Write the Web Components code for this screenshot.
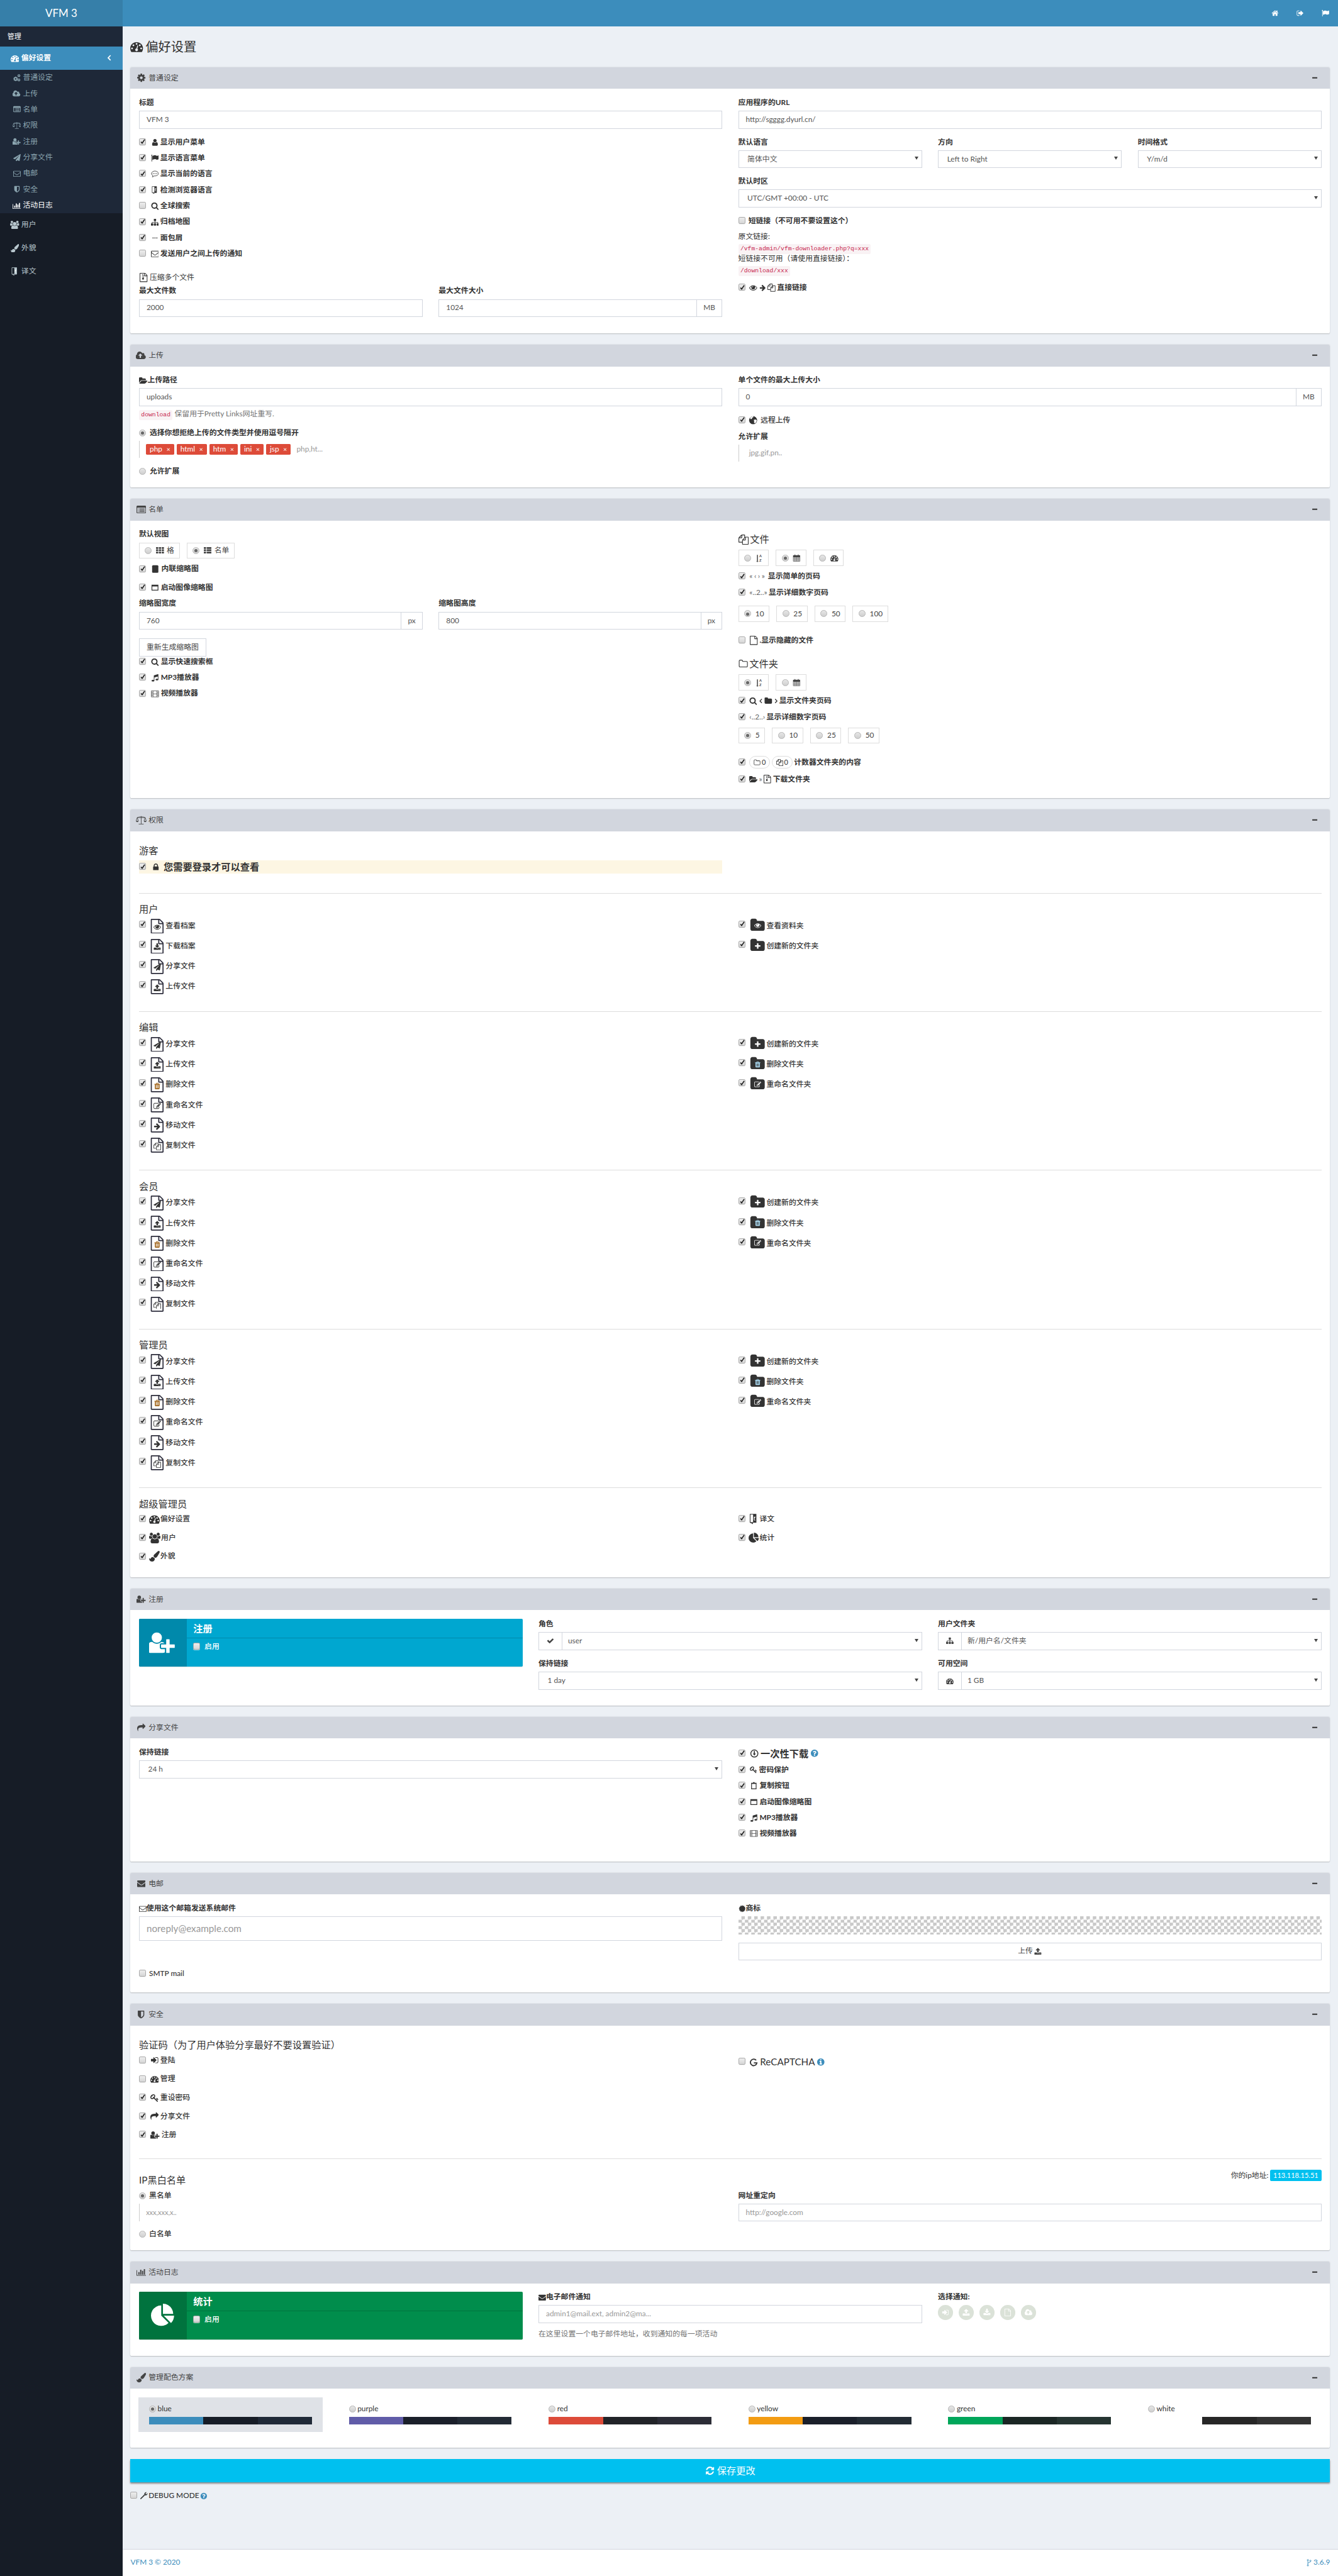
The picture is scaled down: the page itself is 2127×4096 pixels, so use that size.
<!DOCTYPE html>
<html lang="zh">
<head>
<meta charset="utf-8">
<title>VFM 3</title>
<style>
  body { margin: 0; background: #ecf0f5; color: #333; font: 14px/20px Lato, "Noto Sans CJK SC", sans-serif; overflow-x: hidden; }
  /* every size below is a reference pixel, the zoom brings the 2512 wide page into the window */
  x-app { zoom: .84674; }
  .two { display: grid; grid-template-columns: 1fr 1fr; gap: 0 30px; }
  .three { display: grid; grid-template-columns: repeat(3, 1fr); gap: 0 30px; }
  .col { display: flex; flex-direction: column; min-width: 0; }
  .row { display: flex; }
  .g10 { gap: 10px; }
  .l { display: block; height: 20px; line-height: 20px; font-weight: 700; margin: 0 0 5px; white-space: nowrap; }
  h4 { font-size: 18px; font-weight: 400; line-height: 24px; height: 24px; margin: 0; display: flex; align-items: center; gap: 3px; }
  hr { border: 0; border-top: 1px solid #ddd; margin: 27px 0 17px; }
  code { display: inline-block; height: 19px; line-height: 19px; padding: 0 4px; font: 11.5px/19px "Liberation Mono", monospace; color: #c7254e; background: #f9f2f4; border-radius: 3px; }
  .help { color: #737373; height: 20px; line-height: 20px; white-space: nowrap; }
  .p { height: 20px; line-height: 20px; white-space: nowrap; }
  .grey { color: #666; font-weight: 400; }
  .pill { display: inline-flex; align-items: center; gap: 2px; height: 22px; padding: 0 7px; border: 1px solid #ddd; border-radius: 12px; font-weight: 400; font-size: 13px; }
</style>
</head>
<body>
<script>
  // FontAwesome 4 shapes on a 1792 grid. A value that starts with < is drawn by hand
  const cog = 'M1152 896q0-106-75-181t-181-75-181 75-75 181 75 181 181 75 181-75 75-181zm512-109v222q0 12-8 23t-20 13l-185 28q-19 54-39 91 35 50 107 138 10 12 10 25t-9 23q-27 37-99 108t-94 71q-12 0-26-9l-138-108q-44 23-91 38-16 136-29 186-7 28-36 28h-222q-14 0-24.500-8.500t-11.500-21.500l-28-184q-49-16-90-37l-141 107q-10 9-25 9-14 0-25-11-126-114-165-168-7-10-7-23 0-12 8-23 15-21 51-66.500t54-70.500q-27-50-41-99l-183-27q-13-2-21-12.500t-8-23.500v-222q0-12 8-23t19-13l186-28q14-46 39-92-40-57-107-138-10-12-10-24 0-10 9-23 26-36 98.500-107.500t94.500-71.500q13 0 26 10l138 107q44-23 91-38 16-136 29-186 7-28 36-28h222q14 0 24.500 8.500t11.500 21.500l28 184q49 16 90 37l142-107q9-9 24-9 13 0 25 10 129 119 165 170 7 8 7 22 0 12-8 23-15 21-51 66.500t-54 70.500q26 50 41 98l183 28q13 2 21 12.500t8 23.500z'
  const fileO = 'M1596 380q28 28 48 76t20 88v1152q0 40-28 68t-68 28h-1344q-40 0-68-28t-28-68v-1600q0-40 28-68t68-28h896q40 0 88 20t76 48zm-444-244v376h376q-10-29-22-41l-313-313q-12-12-41-22zm384 1528v-1024h-416q-40 0-68-28t-28-68v-416h-768v1536h1280z'
  const star = [...Array(24)].map((_, i) => {
    const a = i * Math.PI / 12, r = i % 2 ? 660 : 840
    return (896 + r * Math.cos(a)).toFixed() + ',' + (896 + r * Math.sin(a)).toFixed()
  }).join(' ')
  const ICONS = {
    home: 'M1472 992v480q0 26-19 45t-45 19h-384v-384h-256v384h-384q-26 0-45-19t-19-45v-480q0-1 .5-3t.5-3l575-474 575 474q1 2 1 6zm223-69l-62 74q-8 9-21 11h-3q-13 0-21-7l-692-577-692 577q-12 8-24 7-13-2-21-11l-62-74q-8-10-7-23.500t11-21.500l719-599q32-26 76-26t76 26l244 204v-195q0-14 9-23t23-9h192q14 0 23 9t9 23v408l219 182q10 8 11 21.500t-7 23.500z',
    'sign-out': 'M704 1440q0 4 1 20t.5 26.500-3 23.500-10 19.500-20.500 6.500h-320q-119 0-203.500-84.500t-84.500-203.500v-704q0-119 84.500-203.500t203.500-84.500h320q13 0 22.500 9.500t9.500 22.500q0 4 1 20t.5 26.500-3 23.500-10 19.500-20.500 6.500h-320q-66 0-113 47t-47 113v704q0 66 47 113t113 47h312l11.500 1 11.500 3 8 5.500 7 9 2 13.500zm928-544q0 26-19 45l-544 544q-19 19-45 19t-45-19-19-45v-288h-448q-26 0-45-19t-19-45v-384q0-26 19-45t45-19h448v-288q0-26 19-45t45-19 45 19l544 544q19 19 19 45z',
    'sign-in': 'M1312 896q0 26-19 45l-544 544q-19 19-45 19t-45-19-19-45v-288h-448q-26 0-45-19t-19-45v-384q0-26 19-45t45-19h448v-288q0-26 19-45t45-19 45 19l544 544q19 19 19 45zm352-352v704q0 119-84.500 203.500t-203.500 84.500h-320q-13 0-22.500-9.500t-9.500-22.500q0-4-1-20t-.5-26.500 3-23.500 10-19.500 20.500-6.500h320q66 0 113-47t47-113v-704q0-66-47-113t-113-47h-312l-11.500-1-11.500-3-8-5.500-7-9-2-13.500q0-4-1-20t-.5-26.500 3-23.500 10-19.500 20.500-6.500h320q119 0 203.500 84.500t84.500 203.500z',
    flag: 'M320 256q0 72-64 110v1266q0 13-9.500 22.500t-22.500 9.500h-64q-13 0-22.500-9.500t-9.500-22.500v-1266q-64-38-64-110 0-53 37.500-90.500t90.500-37.500 90.500 37.500 37.500 90.500zm1472 64v763q0 25-12.500 38.500t-39.500 27.500q-215 116-369 116-61 0-123.500-22t-108.500-48-115.500-48-142.500-22q-192 0-464 146-17 9-33 9-26 0-45-19t-19-45v-742q0-32 31-55 21-14 79-43 236-120 421-120 107 0 200 29t219 88q38 19 88 19 54 0 117.500-21t110-47 88-47 54.500-21q26 0 45 19t19 45z',
    user: 'M1536 1399q0 109-62.500 187t-150.500 78h-854q-88 0-150.500-78t-62.500-187q0-85 8.500-160.500t31.500-152 58.500-131 94-89 134.500-34.500q131 128 313 128t313-128q76 0 134.500 34.500t94 89 58.500 131 31.500 152 8.500 160.500zm-256-887q0 159-112.500 271.500t-271.500 112.500-271.500-112.500-112.500-271.500 112.500-271.500 271.500-112.500 271.500 112.500 112.500 271.500z',
    search: 'M1216 832q0-185-131.500-316.500t-316.500-131.500-316.500 131.500-131.500 316.500 131.500 316.500 316.500 131.500 316.500-131.500 131.500-316.500zm512 832q0 52-38 90t-90 38q-54 0-90-38l-343-342q-179 124-399 124-143 0-273.500-55.500t-225-150-150-225-55.500-273.500 55.500-273.500 150-225 225-150 273.500-55.500 273.500 55.500 225 150 150 225 55.500 273.500q0 220-124 399l343 343q37 37 37 90z',
    plus: 'M1600 736v192q0 40-28 68t-68 28h-416v416q0 40-28 68t-68 28h-192q-40 0-68-28t-28-68v-416h-416q-40 0-68-28t-28-68v-192q0-40 28-68t68-28h416v-416q0-40 28-68t68-28h192q40 0 68 28t28 68v416h416q40 0 68 28t28 68z',
    minus: 'M1600 736v192q0 40-28 68t-68 28h-1216q-40 0-68-28t-28-68v-192q0-40 28-68t68-28h1216q40 0 68 28t28 68z',
    folder: 'M1728 608v704q0 92-66 158t-158 66h-1216q-92 0-158-66t-66-158v-960q0-92 66-158t158-66h320q92 0 158 66t66 158v32h672q92 0 158 66t66 158z',
    'folder-o': 'M1600 1312v-704q0-40-28-68t-68-28h-704q-40 0-68-28t-28-68v-64q0-40-28-68t-68-28h-320q-40 0-68 28t-28 68v960q0 40 28 68t68 28h1216q40 0 68-28t28-68zm128-704v704q0 92-66 158t-158 66h-1216q-92 0-158-66t-66-158v-960q0-92 66-158t158-66h320q92 0 158 66t66 158v32h672q92 0 158 66t66 158z',
    'folder-open': 'M1879 952q0 31-31 66l-336 396q-43 51-120.500 86.500t-143.500 35.500h-1088q-34 0-60.500-13t-26.500-43q0-31 31-66l336-396q43-51 120.500-86.500t143.500-35.500h1088q34 0 60.500 13t26.500 43zm-343-344v160h-832q-94 0-197 47.500t-164 119.500l-337 396-5 6q0-4-.5-12.500t-.5-12.500v-960q0-92 66-158t158-66h320q92 0 158 66t66 158v32h544q92 0 158 66t66 158z',
    'file-o': fileO,
    'envelope-o': 'M1664 1504v-768q-32 36-69 66-268 206-426 338-51 43-83 67t-86.500 48.500-102.500 24.500h-2q-48 0-102.500-24.500t-86.500-48.500-83-67q-158-132-426-338-37-30-69-66v768q0 13 9.500 22.500t22.500 9.500h1472q13 0 22.500-9.500t9.500-22.500zm0-1051v-24.500l-.5-13-3-12.500-5.500-9-9-7.500-14-2.500h-1472q-13 0-22.500 9.500t-9.500 22.500q0 168 147 284 193 152 401 317 6 5 35 29.500t46 37.500 44.500 31.500 50.500 27.500 43 9h2q20 0 43-9t50.500-27.500 44.500-31.500 46-37.500 35-29.500q208-165 401-317 54-43 100.500-115.500t46.500-131.500zm128-37v1088q0 66-47 113t-113 47h-1472q-66 0-113-47t-47-113v-1088q0-66 47-113t113-47h1472q66 0 113 47t47 113z',
    envelope: 'M1792 710v794q0 66-47 113t-113 47h-1472q-66 0-113-47t-47-113v-794q44 49 101 87 362 246 497 345 57 42 92.500 65.500t94.500 48 110 24.500h2q51 0 110-24.500t94.500-48 92.500-65.500q170-123 498-345 57-39 100-87zm0-294q0 79-49 151t-122 123q-376 261-468 325-10 7-42.500 30.500t-54 38-52 32.500-57.500 27-50 9h-2q-23 0-50-9t-57.500-27-52-32.500-54-38-42.500-30.500q-91-64-262-182.500t-205-142.500q-62-42-117-115.500t-55-136.500q0-78 41.500-130t118.500-52h1472q65 0 112.500 47t47.500 113z',
    lock: 'M640 768h512v-192q0-106-75-181t-181-75-181 75-75 181v192zm832 96v576q0 40-28 68t-68 28h-960q-40 0-68-28t-28-68v-576q0-40 28-68t68-28h32v-192q0-184 132-316t316-132 316 132 132 316v192h32q40 0 68 28t28 68z',
    cog,
    cogs: `<g transform="translate(-60,480) scale(.72)"><path d="${cog}"/></g><g transform="translate(960,-60) scale(.46)"><path d="${cog}"/></g><g transform="translate(960,960) scale(.46)"><path d="${cog}"/></g>`,
    share: 'M1792 640q0 26-19 45l-512 512q-19 19-45 19t-45-19-19-45v-256h-224q-98 0-175.500 6t-154 21.500-133 42.500-105.500 69.500-80 101-48.500 138.500-17.500 181q0 55 5 123 0 6 2.500 23.500t2.500 26.500q0 15-8.500 25t-23.500 10q-16 0-28-17-7-9-13-22t-13.500-30-10.500-24q-127-285-127-451 0-199 53-333 162-403 875-403h224v-256q0-26 19-45t45-19 45 19l512 512q19 19 19 45z',
    'paper-plane': 'M1764 11q33 24 27 64l-256 1536q-5 29-32 45-14 8-31 8-11 0-24-5l-453-185-242 295q-18 23-49 23-13 0-22-4-19-7-30.500-23.500t-11.500-36.500v-349l864-1059-1069 925-395-162q-37-14-40-55-2-40 32-59l1664-960q15-9 32-9 20 0 36 11z',
    eye: 'M1664 960q-152-236-381-353 61 104 61 225 0 185-131.500 316.500t-316.500 131.500-316.500-131.500-131.500-316.500q0-121 61-225-229 117-381 353 133 205 333.500 326.500t434.500 121.500 434.500-121.500 333.500-326.500zm-720-384q0-20-14-34t-34-14q-125 0-214.500 89.500t-89.500 214.500q0 20 14 34t34 14 34-14 14-34q0-86 61-147t147-61q20 0 34-14t14-34zm848 384q0 34-20 69-140 230-376.500 368.500t-499.500 138.500-499.500-139-376.500-368q-20-35-20-69t20-69q140-229 376.500-368t499.500-139 499.500 139 376.500 368q20 35 20 69z',
    check: 'M1671 566q0 40-28 68l-724 724-136 136q-28 28-68 28t-68-28l-136-136-362-362q-28-28-28-68t28-68l136-136q28-28 68-28t68 28l294 295 656-657q28-28 68-28t68 28l136 136q28 28 28 68z',
    sitemap: 'M1792 1248v320q0 40-28 68t-68 28h-320q-40 0-68-28t-28-68v-320q0-40 28-68t68-28h96v-192h-512v192h96q40 0 68 28t28 68v320q0 40-28 68t-68 28h-320q-40 0-68-28t-28-68v-320q0-40 28-68t68-28h96v-192h-512v192h96q40 0 68 28t28 68v320q0 40-28 68t-68 28h-320q-40 0-68-28t-28-68v-320q0-40 28-68t68-28h96v-192q0-52 38-90t90-38h512v-192h-96q-40 0-68-28t-28-68v-320q0-40 28-68t68-28h320q40 0 68 28t28 68v320q0 40-28 68t-68 28h-96v192h512q52 0 90 38t38 90v192h96q40 0 68 28t28 68z',
    th: 'M512 1248v192q0 40-28 68t-68 28h-320q-40 0-68-28t-28-68v-192q0-40 28-68t68-28h320q40 0 68 28t28 68zm0-512v192q0 40-28 68t-68 28h-320q-40 0-68-28t-28-68v-192q0-40 28-68t68-28h320q40 0 68 28t28 68zm640 512v192q0 40-28 68t-68 28h-320q-40 0-68-28t-28-68v-192q0-40 28-68t68-28h320q40 0 68 28t28 68zm-640-1024v192q0 40-28 68t-68 28h-320q-40 0-68-28t-28-68v-192q0-40 28-68t68-28h320q40 0 68 28t28 68zm640 512v192q0 40-28 68t-68 28h-320q-40 0-68-28t-28-68v-192q0-40 28-68t68-28h320q40 0 68 28t28 68zm640 512v192q0 40-28 68t-68 28h-320q-40 0-68-28t-28-68v-192q0-40 28-68t68-28h320q40 0 68 28t28 68zm-640-1024v192q0 40-28 68t-68 28h-320q-40 0-68-28t-28-68v-192q0-40 28-68t68-28h320q40 0 68 28t28 68zm640 512v192q0 40-28 68t-68 28h-320q-40 0-68-28t-28-68v-192q0-40 28-68t68-28h320q40 0 68 28t28 68zm0-512v192q0 40-28 68t-68 28h-320q-40 0-68-28t-28-68v-192q0-40 28-68t68-28h320q40 0 68 28t28 68z',
    'th-list': 'M512 1248v192q0 40-28 68t-68 28h-320q-40 0-68-28t-28-68v-192q0-40 28-68t68-28h320q40 0 68 28t28 68zm0-512v192q0 40-28 68t-68 28h-320q-40 0-68-28t-28-68v-192q0-40 28-68t68-28h320q40 0 68 28t28 68zm1280 512v192q0 40-28 68t-68 28h-960q-40 0-68-28t-28-68v-192q0-40 28-68t68-28h960q40 0 68 28t28 68zm-1280-1024v192q0 40-28 68t-68 28h-320q-40 0-68-28t-28-68v-192q0-40 28-68t68-28h320q40 0 68 28t28 68zm1280 512v192q0 40-28 68t-68 28h-960q-40 0-68-28t-28-68v-192q0-40 28-68t68-28h960q40 0 68 28t28 68zm0-512v192q0 40-28 68t-68 28h-960q-40 0-68-28t-28-68v-192q0-40 28-68t68-28h960q40 0 68 28t28 68z',
    'pie-chart': 'M768 890l546 546q-106 108-247.500 168t-298.500 60q-209 0-385.500-103t-279.500-279.500-103-385.500 103-385.500 279.500-279.500 385.500-103v762zm187 6h773q0 157-60 298.500t-168 247.500zm709-128h-768v-768q209 0 385.500 103t279.500 279.500 103 385.500z',
    users: 'M593 896q-162 5-265 128h-134q-82 0-138-40.500t-56-118.500q0-353 124-353 6 0 43.500 21t97.500 42.500 119 21.500q67 0 133-23-5 37-5 66 0 139 81 256zm1071 637q0 120-73 189.500t-194 69.500h-874q-121 0-194-69.500t-73-189.500q0-53 3.500-103.500t14-109 26.500-108.500 43-97.500 62-81 85.500-53.500 111.500-20q10 0 43 21.500t73 48 107 48 135 21.500 135-21.500 107-48 73-48 43-21.500q61 0 111.500 20t85.500 53.500 62 81 43 97.500 26.500 108.500 14 109 3.500 103.500zm-1024-1277q0 106-75 181t-181 75-181-75-75-181 75-181 181-75 181 75 75 181zm704 384q0 159-112.500 271.500t-271.500 112.500-271.500-112.500-112.500-271.500 112.500-271.500 271.500-112.500 271.500 112.500 112.500 271.500zm576 225q0 78-56 118.500t-138 40.500h-134q-103-123-265-128 81-117 81-256 0-29-5-66 66 23 133 23 59 0 119-21.500t97.500-42.500 43.500-21q124 0 124 353zm-128-609q0 106-75 181t-181 75-181-75-75-181 75-181 181-75 181 75 75 181z',
    'user-plus': 'M576 896q-159 0-271.500-112.500t-112.500-271.500 112.500-271.500 271.500-112.500 271.500 112.500 112.500 271.500-112.500 271.500-271.500 112.500zm960 128h352q13 0 22.500 9.500t9.500 22.500v192q0 13-9.500 22.500t-22.500 9.500h-352v352q0 13-9.500 22.500t-22.500 9.500h-192q-13 0-22.500-9.500t-9.500-22.500v-352h-352q-13 0-22.500-9.500t-9.500-22.500v-192q0-13 9.500-22.500t22.500-9.500h352v-352q0-13 9.500-22.500t22.500-9.500h192q13 0 22.500 9.500t9.500 22.500v352zm-736 224q0 52 38 90t90 38h256v238q-68 50-171 50h-874q-121 0-194-69t-73-190q0-53 3.500-103.500t14-109 26.500-108.500 43-97.500 62-81 85.500-53.500 111.500-20q19 0 39 17 79 61 154.500 91.500t164.500 30.500 164.500-30.500 154.500-91.500q20-17 39-17 132 0 217 96h-223q-52 0-90 38t-38 90v192z',
    tachometer: 'M384 1152q0-53-37.500-90.500t-90.500-37.500-90.500 37.500-37.500 90.500 37.500 90.500 90.500 37.500 90.500-37.500 37.500-90.500zm192-448q0-53-37.500-90.500t-90.500-37.500-90.500 37.500-37.500 90.500 37.500 90.500 90.500 37.500 90.500-37.500 37.500-90.500zm428 481l101-382q6-26-7.500-48.500t-38.500-29.500-48 6.500-30 39.500l-101 382q-60 5-107 43.500t-63 98.500q-20 77 20 146t117 89 146-20 89-117q16-60-6-117t-72-91zm660-33q0-53-37.500-90.500t-90.500-37.500-90.500 37.500-37.500 90.500 37.500 90.500 90.500 37.500 90.500-37.500 37.500-90.500zm-640-640q0-53-37.500-90.500t-90.500-37.500-90.500 37.500-37.500 90.500 37.500 90.500 90.500 37.500 90.500-37.500 37.500-90.500zm448 192q0-53-37.500-90.500t-90.500-37.500-90.500 37.500-37.500 90.500 37.500 90.500 90.500 37.500 90.500-37.500 37.500-90.500zm320 448q0 261-141 483-19 29-54 29h-1402q-35 0-54-29-141-221-141-483 0-182 71-348t191-286 286-191 348-71 348 71 286 191 191 286 71 348z',
    'cloud-upload': 'M1216 864q0-14-9-23l-352-352q-9-9-23-9t-23 9l-351 351q-10 12-10 24 0 14 9 23t23 9h224v352q0 13 9.500 22.500t22.500 9.500h192q13 0 22.500-9.500t9.500-22.500v-352h224q13 0 22.500-9.500t9.500-22.500zm640 288q0 159-112.500 271.500t-271.500 112.500h-1088q-185 0-316.500-131.500t-131.500-316.500q0-130 70-240t188-165q-2-30-2-43 0-212 150-362t362-150q156 0 285.500 87t188.500 231q71-62 166-62 106 0 181 75t75 181q0 76-41 138 130 31 213.500 135.500t83.500 238.500z',
    'list-alt': 'M384 1184v64q0 13-9.500 22.500t-22.500 9.500h-64q-13 0-22.500-9.500t-9.500-22.500v-64q0-13 9.500-22.500t22.500-9.500h64q13 0 22.500 9.500t9.500 22.500zm0-256v64q0 13-9.500 22.500t-22.500 9.500h-64q-13 0-22.500-9.500t-9.500-22.500v-64q0-13 9.500-22.500t22.500-9.500h64q13 0 22.500 9.500t9.500 22.500zm0-256v64q0 13-9.500 22.500t-22.500 9.500h-64q-13 0-22.500-9.500t-9.500-22.500v-64q0-13 9.500-22.500t22.500-9.500h64q13 0 22.500 9.500t9.500 22.500zm1152 512v64q0 13-9.500 22.500t-22.500 9.500h-960q-13 0-22.500-9.500t-9.500-22.500v-64q0-13 9.500-22.500t22.500-9.500h960q13 0 22.500 9.500t9.500 22.500zm0-256v64q0 13-9.500 22.500t-22.500 9.500h-960q-13 0-22.500-9.500t-9.500-22.500v-64q0-13 9.500-22.500t22.500-9.500h960q13 0 22.500 9.500t9.500 22.500zm0-256v64q0 13-9.500 22.500t-22.500 9.500h-960q-13 0-22.500-9.500t-9.500-22.500v-64q0-13 9.500-22.500t22.500-9.500h960q13 0 22.500 9.500t9.500 22.500zm128 704v-832q0-13-9.500-22.500t-22.500-9.500h-1472q-13 0-22.500 9.500t-9.500 22.500v832q0 13 9.500 22.500t22.500 9.500h1472q13 0 22.500-9.500t9.500-22.500zm128-1088v1088q0 66-47 113t-113 47h-1472q-66 0-113-47t-47-113v-1088q0-66 47-113t113-47h1472q66 0 113 47t47 113z',
    shield: 'M1344 960v-640h-448v1137q119-63 213-137 235-184 235-360zm192-768v768q0 86-33.500 170.500t-83 150-118 127.500-126.500 103-121 77.500-89.500 49.500-42.500 20q-12 6-26 6t-26-6q-16-7-42.500-20t-89.500-49.500-121-77.500-126.500-103-118-127.500-83-150-33.500-170.500v-768q0-26 19-45t45-19h1152q26 0 45 19t19 45z',
    'bar-chart': 'M640 896v512h-256v-512h256zm384-512v1024h-256v-1024h256zm1024 1152v128h-2048v-1152h128v1024h1920zm-640-896v768h-256v-768h256zm384-384v1152h-256v-1152h256z',
    'paint-brush': 'M1615 0q70 0 122.500 46.500t52.500 116.500q0 63-45 151-332 629-465 752-97 91-218 91-126 0-216.500-92.500t-90.500-219.500q0-128 92-212l638-579q59-54 130-54zm-909 1034q39 76 106.500 130t150.500 76l1 71q4 213-129.500 347t-348.500 134q-123 0-218-46.500t-152.500-127.500-86.500-183-29-220q7 5 41 30t62 44.500 59 36.500 46 17q41 0 55-37 25-66 57.500-112.500t69.500-76 88-47.500 103-25.500 125-10.500z',
    upload: 'M1344 1472q0-26-19-45t-45-19-45 19-19 45 19 45 45 19 45-19 19-45zm256 0q0-26-19-45t-45-19-45 19-19 45 19 45 45 19 45-19 19-45zm128-224v320q0 40-28 68t-68 28h-1472q-40 0-68-28t-28-68v-320q0-40 28-68t68-28h427q21 56 70.500 92t110.500 36h256q61 0 110.500-36t70.500-92h427q40 0 68 28t28 68zm-325-648q-17 40-59 40h-256v448q0 26-19 45t-45 19h-256q-26 0-45-19t-19-45v-448h-256q-42 0-59-40-17-39 14-69l448-448q18-19 45-19t45 19l448 448q31 30 14 69z',
    download: 'M1344 1344q0-26-19-45t-45-19-45 19-19 45 19 45 45 19 45-19 19-45zm256 0q0-26-19-45t-45-19-45 19-19 45 19 45 45 19 45-19 19-45zm128-224v320q0 40-28 68t-68 28h-1472q-40 0-68-28t-28-68v-320q0-40 28-68t68-28h465l135 136q58 56 136 56t136-56l136-136h464q40 0 68 28t28 68zm-325-569q17 41-14 70l-448 448q-18 19-45 19t-45-19l-448-448q-31-29-14-70 17-39 59-39h256v-448q0-26 19-45t45-19h256q26 0 45 19t19 45v448h256q42 0 59 39z',
    trash: 'M704 1376v-704q0-14-9-23t-23-9h-64q-14 0-23 9t-9 23v704q0 14 9 23t23 9h64q14 0 23-9t9-23zm256 0v-704q0-14-9-23t-23-9h-64q-14 0-23 9t-9 23v704q0 14 9 23t23 9h64q14 0 23-9t9-23zm256 0v-704q0-14-9-23t-23-9h-64q-14 0-23 9t-9 23v704q0 14 9 23t23 9h64q14 0 23-9t9-23zm-544-992h448l-48-117q-7-9-17-11h-317q-10 2-17 11zm928 32v64q0 14-9 23t-23 9h-96v948q0 83-47 143.500t-113 60.500h-832q-66 0-113-58.500t-47-141.500v-952h-96q-14 0-23-9t-9-23v-64q0-14 9-23t23-9h309l70-167q15-37 54-63t79-26h320q40 0 79 26t54 63l70 167h309q14 0 23 9t9 23z',
    edit: 'M888 1184l116-116-152-152-116 116v56h96v96h56zm440-720q-16-16-33 1l-350 350q-17 17-1 33t33-1l350-350q17-17 1-33zm80 594v190q0 119-84.500 203.500t-203.500 84.500h-832q-119 0-203.500-84.500t-84.500-203.500v-832q0-119 84.500-203.500t203.500-84.500h832q63 0 117 25 15 7 18 23 3 17-9 29l-49 49q-14 14-32 8-23-6-45-6h-832q-66 0-113 47t-47 113v832q0 66 47 113t113 47h832q66 0 113-47t47-113v-126q0-13 9-22l64-64q15-15 35-7t20 29zm-96-738l288 288-672 672h-288v-288zm444 132l-92 92-288-288 92-92q28-28 68-28t68 28l152 152q28 28 28 68t-28 68z',
    'arrow-right': 'M1600 960q0 54-37 91l-651 651q-39 37-91 37-51 0-90-37l-75-75q-38-38-38-91t38-91l293-293h-704q-52 0-84.500-37.500t-32.500-90.500v-128q0-53 32.500-90.500t84.500-37.500h704l-293-294q-38-36-38-90t38-90l75-75q38-38 90-38 53 0 91 38l651 651q37 35 37 90z',
    files: 'M1696 384q40 0 68 28t28 68v1216q0 40-28 68t-68 28h-960q-40 0-68-28t-28-68v-288h-544q-40 0-68-28t-28-68v-672q0-40 20-88t48-76l408-408q28-28 76-48t88-20h416q40 0 68 28t28 68v328q68-40 128-40h416zm-544 213l-299 299h299v-299zm-640-384l-299 299h299v-299zm196 647l316-316v-416h-384v416q0 40-28 68t-68 28h-416v640h512v-256q0-40 20-88t48-76zm956 804v-1152h-384v416q0 40-28 68t-68 28h-416v640h896z',
    refresh: 'M1639 1056q0 5-1 7-64 268-268 434.500t-478 166.500q-146 0-282.500-55t-243.500-157l-129 129q-19 19-45 19t-45-19-19-45v-448q0-26 19-45t45-19h448q26 0 45 19t19 45-19 45l-137 137q71 66 161 102t187 36q134 0 250-65t186-179q11-17 53-117 8-23 30-23h192q13 0 22.500 9.500t9.500 22.500zm25-800v448q0 26-19 45t-45 19h-448q-26 0-45-19t-19-45 19-45l138-138q-148-137-349-137-134 0-250 65t-186 179q-11 17-53 117-8 23-30 23h-199q-13 0-22.500-9.500t-9.500-22.500v-7q65-268 270-434.500t480-166.500q146 0 284 55.500t245 156.500l130-129q19-19 45-19t45 19 19 45z',
    question: 'M1024 1376v-192q0-14-9-23t-23-9h-192q-14 0-23 9t-9 23v192q0 14 9 23t23 9h192q14 0 23-9t9-23zm256-672q0-88-55.500-163t-138.500-116-170-41q-243 0-371 213-15 24 8 42l132 100q7 6 19 6 16 0 25-12 53-68 86-92 34-24 86-24 48 0 85.500 26t37.500 59q0 38-20 61t-68 45q-63 28-115.500 86.500t-52.500 125.500v36q0 14 9 23t23 9h192q14 0 23-9t9-23q0-19 21.500-49.500t54.500-49.500q32-18 49-28.500t46-35 44.500-48 28-60.500 12.500-81zm384 192q0 209-103 385.500t-279.500 279.500-385.500 103-385.500-103-279.500-279.500-103-385.500 103-385.500 279.500-279.500 385.500-103 385.500 103 279.500 279.500 103 385.500z',
    info: 'M1152 1376v-160q0-14-9-23t-23-9h-96v-512q0-14-9-23t-23-9h-320q-14 0-23 9t-9 23v160q0 14 9 23t23 9h96v320h-96q-14 0-23 9t-9 23v160q0 14 9 23t23 9h448q14 0 23-9t9-23zm-128-896v-160q0-14-9-23t-23-9h-192q-14 0-23 9t-9 23v160q0 14 9 23t23 9h192q14 0 23-9t9-23zm640 416q0 209-103 385.500t-279.500 279.500-385.500 103-385.500-103-279.500-279.500-103-385.500 103-385.500 279.500-279.500 385.500-103 385.500 103 279.500 279.500 103 385.500z',
    music: 'M1664 224v1120q0 50-34 89t-86 60.500-103.500 32-96.500 10.500-96.500-10.500-103.500-32-86-60.500-34-89 34-89 86-60.500 103.500-32 96.500-10.500q105 0 192 39v-537l-768 237v709q0 50-34 89t-86 60.500-103.500 32-96.500 10.500-96.500-10.500-103.500-32-86-60.500-34-89 34-89 86-60.500 103.500-32 96.500-10.500q105 0 192 39v-967q0-31 19-56.500t49-35.500l832-256q12-4 28-4 40 0 68 28t28 68z',
    key: 'M832 512q0-80-56-136t-136-56-136 56-56 136q0 42 19 83-41-19-83-19-80 0-136 56t-56 136 56 136 136 56 136-56 56-136q0-42-19-83 41 19 83 19 80 0 136-56t56-136zm851 704q0 17-49 66t-66 49q-9 0-28.500-16t-36.500-33-38.500-40-24.500-26l-96 96 220 220q28 28 28 68 0 42-39 81t-81 39q-40 0-68-28l-671-671q-176 131-365 131-163 0-265.500-102.500t-102.500-265.500q0-160 95-313t248-248 313-95q163 0 265.500 102.500t102.500 265.500q0 189-131 365l355 355 96-96q-3-3-26-24.500t-40-38.500-33-36.500-16-28.500q0-17 49-66t66-49q13 0 23 10 6 6 46 44.500t82 79.500 86.500 86 73 78 28.500 41z',
    scale: '<g fill="none" stroke="currentColor" stroke-width="90"><path d="M896 180v1300M480 1520h832M230 420h1332q-300-120-666-120t-666 120z"/><path d="M230 430L40 980M230 430l190 550M1562 430l-190 550M1562 430l190 550"/></g><path d="M0 980h460q-30 200-230 200T0 980zM1332 980h460q-30 200-230 200t-230-200z"/>',
    comment: '<path fill="none" stroke="currentColor" stroke-width="120" d="M896 280c-420 0-780 250-780 570 0 190 130 350 320 450-10 130-80 230-150 300 170-20 330-120 430-230 60 10 120 14 180 14 420 0 780-250 780-534S1316 280 896 280z"/><circle cx="520" cy="850" r="95"/><circle cx="896" cy="850" r="95"/><circle cx="1272" cy="850" r="95"/>',
    language: '<path fill="none" stroke="currentColor" stroke-width="110" d="M260 80h1000v1380H260z"/><path d="M760 80h500v1380H760z"/><path fill="#fff" d="M900 500h260v110h-70q-30 190-120 300l190 230h-150l-110-130z"/><path d="M240 1500l500 240v-240z"/>',
    globe: '<circle cx="896" cy="896" r="790"/><path fill="#fff" d="M460 240q240-140 500-110l-60 200-240 80 40 220-300 40-90-190zM1030 820l400-60 190 170-120 370-260 240-170-200 40-240z"/>',
    calendar: '<path fill="none" stroke="currentColor" stroke-width="100" d="M160 320h1472v1300H160zM160 700h1472M160 1010h1472M160 1320h1472M530 700v920M896 700v920M1262 700v920"/><path d="M130 290h1532v400H130zM440 120h160v280H440zM1190 120h160v280h-160z"/>',
    sort: '<path d="M330 1620V170h210v1450h200L435 1792 130 1620z"/><text x="860" y="760" font-family="Lato" font-weight="700" font-size="800">A</text><text x="860" y="1680" font-family="Lato" font-weight="700" font-size="800">Z</text>',
    dots: '<circle cx="470" cy="896" r="130"/><circle cx="896" cy="896" r="130"/><circle cx="1322" cy="896" r="130"/>',
    tablet: '<rect x="240" y="90" width="1312" height="1612" rx="220"/>',
    win: '<path fill-rule="evenodd" d="M130 250h1532v1292H130zM300 620v750h1192V620z"/>',
    film: '<path fill="none" stroke="currentColor" stroke-width="100" d="M80 220h1632v1352H80zM460 220v1352M1332 220v1352M80 560h380M80 896h380M80 1232h380M1332 560h380M1332 896h380M1332 1232h380M460 896h872"/>',
    zip: `<path d="${fileO}"/><path d="M640 260h160v130H640zM800 400h160v130H800zM640 540h160v130H640zM800 680h160v130H800zM640 900h320v400H640z"/>`,
    circledown: '<circle cx="896" cy="896" r="700" fill="none" stroke="currentColor" stroke-width="180"/><path d="M790 420h212v480h190L896 1320 600 900h190z"/>',
    google: '<path fill="none" stroke="currentColor" stroke-width="230" d="M1380 500A640 640 0 1 0 1520 1010H920"/>',
    cert: `<polygon points="${star}"/>`,
    wrench: '<path fill="none" stroke="currentColor" stroke-width="230" stroke-linecap="round" d="M260 1560L1100 720"/><path d="M1040 540q0-280 300-420 120-40 240 0l-290 290 160 180 290-270q40 120-10 250-140 290-430 290z"/>',
    fork: '<g fill="none" stroke="currentColor" stroke-width="130"><circle cx="620" cy="260" r="160"/><circle cx="620" cy="1530" r="160"/><circle cx="1240" cy="430" r="160"/><path d="M620 420v950M620 1080q0-190 300-240 320-60 320-250"/></g>',
    clip: '<path fill-rule="evenodd" d="M300 230h420V110h360v120h420v1450H300zM470 480v1030h860V480z"/>',
    angleleft: '<path d="M1170 300L600 896l570 596" fill="none" stroke="currentColor" stroke-width="260"/>',
    angleright: '<path d="M620 300l570 596-570 596" fill="none" stroke="currentColor" stroke-width="260"/>'
  }
  const WIDE = { 'user-plus': 2048, 'cloud-upload': 1920, 'folder-open': 1920, 'bar-chart': 2048, users: 1920 }

  function svg(name, size = 14, color = 'currentColor', extra = '') {
    const v = ICONS[name] || '', w = WIDE[name] || 1792
    const body = v[0] === '<' ? v : `<path d="${v}"/>`
    return `<svg xmlns="http://www.w3.org/2000/svg" viewBox="0 0 ${w} 1792" width="${size * w / 1792}" height="${size}" fill="${color}" style="display:block;flex:none;${extra}">${body}</svg>`
  }

  // small helper so that each element is its css plus a function that gives its markup
  function def(tag, css, html) {
    customElements.define(tag, class extends HTMLElement {
      connectedCallback() {
        if (this.shadowRoot) return
        this.attachShadow({mode: 'open'}).innerHTML = `<style>${css}</style>` + html(this)
      }
    })
  }
  const at = (el, k, d = '') => el.hasAttribute(k) ? el.getAttribute(k) : d

  def('x-i', `:host { display: inline-flex; align-items: center; justify-content: center; flex: none; vertical-align: middle; }`,
    e => svg(at(e, 'n'), +at(e, 's', 14), at(e, 'c', 'currentColor')))

  def('x-check', `
    :host { display: inline-block; flex: none; box-sizing: border-box; width: 13px; height: 13px; border: 1px solid #a9a9a9; border-radius: 2.5px; background: linear-gradient(#ededed, #d6d6d6); box-shadow: 0 1px 0 #eee; position: relative; top: -1px; }
    svg { position: absolute; left: 0; top: -1px; }`,
    e => e.hasAttribute('on') ? `<svg width="12" height="12" viewBox="0 0 12 12"><path d="M2.5 6.500l2.200 2.500L9.500 2" fill="none" stroke="#222" stroke-width="2"/></svg>` : '')

  def('x-radio', `
    :host { display: inline-block; flex: none; box-sizing: border-box; width: 13px; height: 13px; border: 1px solid #b5b5b5; border-radius: 50%; background: linear-gradient(#e6e6e6, #cfcfcf); position: relative; }
    i { position: absolute; left: 2.500px; top: 2.500px; width: 6px; height: 6px; border-radius: 50%; background: #666; }`,
    e => e.hasAttribute('on') ? '<i></i>' : '')

  // a line with a checkbox or a radio in front of what the user passes in
  def('x-opt', `
    :host { display: flex; align-items: center; height: var(--h, 20px); font-weight: var(--w, 700); white-space: nowrap; font-size: var(--f, 14px); color: var(--c, #333); }
    .t { display: flex; align-items: center; gap: var(--g, 3px); margin-left: var(--m, 9px); }`,
    e => {
      const tag = e.hasAttribute('radio') ? 'x-radio' : 'x-check'
      return `<${tag} ${e.hasAttribute('on') ? 'on' : ''}></${tag}><span class="t"><slot></slot></span>`
    })

  // a radio in a thin bordered box
  def('x-rb', `
    :host { display: inline-flex; align-items: center; box-sizing: border-box; height: 30px; padding: 0 9px 0 10px; border: 1px solid #ddd; background: #fff; white-space: nowrap; gap: 8px; font-size: 14px; color: #444; }
    span { display: flex; align-items: center; gap: 5px; }`,
    e => `<x-radio ${e.hasAttribute('on') ? 'on' : ''}></x-radio><span><slot></slot></span>`)

  // text field, and with the select attribute a native looking drop down
  def('x-field', `
    :host { display: flex; box-sizing: border-box; height: var(--fh, 34px); background: #fff; border: 1px solid #d2d6de; color: #555; font-size: var(--ff, 14px); white-space: nowrap; }
    .v { flex: 1; display: flex; align-items: center; padding: 0 13px; min-width: 0; }
    .ph { color: #999; }
    .add { display: flex; align-items: center; justify-content: center; padding: 0 12px; border-left: 1px solid #d2d6de; }
    .pre { display: flex; align-items: center; justify-content: center; width: 42px; border-right: 1px solid #d2d6de; flex: none; }
    .caret { align-self: center; width: 0; height: 0; margin: -3px 6px 0 0; border: 4px solid transparent; border-top: 6px solid #444; border-bottom: 0; }
    :host([select]) .v { padding-left: 16px; }
    :host([pre]) .v { padding-left: 11px; }`,
    e => `${e.hasAttribute('pre') ? `<div class="pre">${svg(at(e, 'pre'), 14, '#444')}</div>` : ''}
      <div class="v ${e.hasAttribute('ph') ? 'ph' : ''}">${at(e, 'value') || at(e, 'ph')}</div>
      ${e.hasAttribute('add') ? `<div class="add">${at(e, 'add')}</div>` : ''}
      ${e.hasAttribute('select') ? '<div class="caret"></div>' : ''}`)

  def('x-tag', `
    :host { display: inline-flex; align-items: center; box-sizing: border-box; height: 21px; padding: 0 7px 0 7px; gap: 8px; background: #dd4b39; color: #fff; border-radius: 2px; font-size: 14px; white-space: nowrap; }
    b { font-size: 12px; font-weight: 400; }`,
    () => `<slot></slot><b>×</b>`)

  // the tags input, it only shows a thin line at its left
  def('x-tags', `
    :host { display: flex; align-items: center; gap: 5px; box-sizing: border-box; height: var(--th, 32px); border-left: 1px solid #ccc; padding-left: 12px; color: #999; white-space: nowrap; }
    span { margin-left: 6px; }`,
    e => `<slot></slot><span>${at(e, 'ph')}</span>`)

  def('x-box', `
    :host { display: block; box-sizing: border-box; margin-bottom: 21px; background: #fff; border-radius: 3px; box-shadow: 0 1px 2px rgba(0,0,0,.22); }
    .h { display: flex; align-items: center; height: 41px; padding: 0 23px 0 11px; gap: 5px; background: #d2d6de; border-radius: 3px 3px 0 0; color: #444; }
    .h .m { margin-left: auto; }
    .ic { display: flex; width: 18px; justify-content: center; }
    .b { padding: 16px; }`,
    e => `<div class="h"><div class="ic">${svg(at(e, 'icon'), +at(e, 'is', 18), '#444')}</div><span>${at(e, 'name')}</span><div class="m">${svg('minus', 12, '#333')}</div></div>
      <div class="b"><slot></slot></div>`)

  // one row of the permissions, a big file or folder with a small icon in it
  def('x-perm', `
    :host { display: flex; align-items: center; height: var(--h, 38px); white-space: nowrap; font-weight: 500; }
    .ico { position: relative; margin-left: 9px; flex: none; display: flex; }
    .in { position: absolute; left: 0; right: 0; display: flex; justify-content: center; }
    .t { margin-left: 4px; }
    x-check { margin-top: -5px; }`,
    e => {
      const folder = at(e, 'kind') === 'folder', inner = at(e, 'in')
      const ico = folder
        ? `<div class="ico" style="margin-left:10px;width:26px;justify-content:center">${svg('folder', 29, '#333', 'margin:-3px -2px 0')}<div class="in" style="top:6px">${svg(inner, 13, inner === 'trash' ? '#a9d8f0' : '#fff', inner === 'trash' ? 'color:#fff' : '')}</div></div>`
        : `<div class="ico">${svg('file-o', 28, '#2b2b3a', 'margin:0 -2px')}<div class="in" style="top:9px">${svg(inner, 14, inner === 'trash' ? '#a56b24' : '#333')}</div></div>`
      return `<x-check on></x-check>${ico}<span class="t">${at(e, 'text')}</span>`
    })

  // a block of the permissions box, the rows are given as icon:text pairs
  const FILE6 = 'paper-plane:分享文件,upload:上传文件,trash:删除文件,edit:重命名文件,arrow-right:移动文件,files:复制文件'
  const FOLD3 = 'plus:创建新的文件夹,trash:删除文件夹,edit:重命名文件夹'
  def('x-role', `
    :host { display: block; }
    h4 { font-size: 18px; font-weight: 400; line-height: 24px; height: 24px; margin: 0 0 1px; }
    .two { display: grid; grid-template-columns: 1fr 1fr; gap: 0 30px; }
    hr { border: 0; border-top: 1px solid #ddd; margin: 27px 0 17px; }`,
    e => {
      const rows = (s, kind) => s.split(',').map(r => {
        const [i, t] = r.split(':')
        return `<x-perm kind="${kind}" in="${i}" text="${t}"></x-perm>`
      }).join('')
      return `<h4>${at(e, 'name')}</h4><div class="two"><div>${rows(at(e, 'left', FILE6), 'file')}</div><div>${rows(at(e, 'right', FOLD3), 'folder')}</div></div><hr>`
    })

  def('x-info', `
    :host { display: flex; height: 90px; color: #fff; border-radius: 2px; overflow: hidden; background: var(--bg); box-shadow: 0 1px 1px rgba(0,0,0,.1); }
    .i { width: 90px; flex: none; display: flex; align-items: center; justify-content: center; background: var(--dark); }
    .m { flex: 1; }
    .t { height: 35px; line-height: 36px; padding-left: 12px; font-size: 18px; font-weight: 700; border-bottom: 2px solid var(--dark); }
    .s { padding: 6px 0 0 12px; }
    x-opt { --c: #fff; --w: 500; --m: 8px; }`,
    e => `<div class="i">${svg(at(e, 'icon'), +at(e, 'is', 45), '#fff')}</div><div class="m"><div class="t">${at(e, 'name')}</div><div class="s"><x-opt>启用</x-opt></div></div>`)

  // colour scheme chooser
  def('x-scheme', `
    :host { display: block; box-sizing: border-box; height: 65px; padding: 12px 20px 0; }
    :host([on]) { background: #dfe2e7; }
    x-opt { --w: 400; --m: 3px; }
    .bar { display: flex; height: 14px; margin-top: 5px; }
    .bar i { flex: 1; }`,
    e => {
      const c = at(e, 'c').split(',')
      return `<x-opt radio ${e.hasAttribute('on') ? 'on' : ''}>${at(e, 'name')}</x-opt><div class="bar">${c.map(x => `<i style="background:${x}"></i>`).join('')}</div>`
    })

  def('x-nav', `
    :host { display: flex; align-items: center; height: 44px; padding-left: 20px; color: #b8c7ce; font-size: 14px; white-space: nowrap; position: relative; }
    .ic { width: 16px; display: flex; justify-content: center; margin-right: 4px; }
    :host([on]) { background: #3c8dbc; color: #fff; font-weight: 700; }
    :host([sub]) { height: 30px; padding-left: 24px; color: #8aa4af; }
    :host([sub]) .ic { width: 15px; margin-right: 4px; }
    :host([now]) { color: #fff; }
    .a { position: absolute; right: 18px; top: 50%; margin-top: -7px; }`,
    e => `<div class="ic">${svg(at(e, 'icon'), +at(e, 'is', 14))}</div><span>${at(e, 'text')}</span>${e.hasAttribute('on') ? `<div class="a">${svg('angleleft', 14, '#fff')}</div>` : ''}`)

  def('x-side', `
    :host { display: block; background: #161c26; }
    .logo { height: 50px; background: #367fa9; color: #fff; font-size: 20px; line-height: 50px; text-align: center; }
    .cap { height: 37px; line-height: 37px; padding-left: 14px; background: #1e2838; color: #fff; font-size: 13px; }
    .sub { background: #1e2838; padding: 0; height: 269px; }`,
    () => `<div class="logo">VFM 3</div><div class="cap">管理</div><slot name="act"></slot><div class="sub"><slot name="sub"></slot></div><slot></slot>`)

  def('x-top', `
    :host { display: flex; align-items: center; justify-content: flex-end; height: 50px; background: #3c8dbc; color: #fff; gap: 33px; padding-right: 17px; }`,
    () => svg('home', 14) + svg('sign-out', 14) + svg('flag', 14))

  def('x-save', `
    :host { display: flex; align-items: center; justify-content: center; gap: 4px; height: 44px; background: #00c0ef; color: #fff; font-size: 18px; box-shadow: 0 2px 3px rgba(0,0,0,.45); }`,
    () => svg('refresh', 18) + '<slot></slot>')

  def('x-foot', `
    :host { display: flex; align-items: center; justify-content: space-between; box-sizing: border-box; height: 51px; padding: 0 15px; background: #fff; border-top: 1px solid #d2d6de; color: #3c8dbc; font-size: 14px; }
    span { display: flex; align-items: center; gap: 2px; }`,
    () => `<span>VFM 3 © 2020</span><span>${svg('fork', 14)}3.6.9</span>`)

  def('x-bub', `:host { display: flex; align-items: center; justify-content: center; width: 28px; height: 28px; border-radius: 50%; background: #dbe2d8; }`,
    e => svg(at(e, 'n'), 14, '#fff'))

  def('x-app', `
    :host { display: grid; grid-template-columns: 230px 1fr; grid-template-rows: 50px 1fr auto; height: 4837px; overflow: hidden; }
    .s { grid-row: 1 / 4; display: grid; }
    .m { padding: 23px 15px 0; min-width: 0; }
    .t { display: flex; align-items: center; gap: 4px; height: 30px; margin-bottom: 23px; font-size: 24px; color: #333; }`,
    e => `<div class="s"><slot name="side"></slot></div><div><slot name="top"></slot></div>
      <div class="m"><div class="t">${svg('tachometer', 24, '#333')}<span>${at(e, 'heading')}</span></div><slot></slot></div>
      <div><slot name="foot"></slot></div>`)
</script>

<x-app heading="偏好设置">
  <x-side slot="side">
    <x-nav slot="act" on icon="tachometer" is="16" text="偏好设置"></x-nav>
    <x-nav slot="sub" sub icon="cogs" text="普通设定"></x-nav>
    <x-nav slot="sub" sub icon="cloud-upload" text="上传"></x-nav>
    <x-nav slot="sub" sub icon="list-alt" text="名单"></x-nav>
    <x-nav slot="sub" sub icon="scale" is="16" text="权限"></x-nav>
    <x-nav slot="sub" sub icon="user-plus" text="注册"></x-nav>
    <x-nav slot="sub" sub icon="paper-plane" text="分享文件"></x-nav>
    <x-nav slot="sub" sub icon="envelope-o" text="电邮"></x-nav>
    <x-nav slot="sub" sub icon="shield" text="安全"></x-nav>
    <x-nav slot="sub" sub now icon="bar-chart" text="活动日志"></x-nav>
    <x-nav icon="users" is="16" text="用户"></x-nav>
    <x-nav icon="paint-brush" is="16" text="外貌"></x-nav>
    <x-nav icon="language" is="16" text="译文"></x-nav>
  </x-side>
  <x-top slot="top"></x-top>

  <x-box icon="cog" name="普通设定" style="min-height:500px">
    <div class="two">
      <div class="col">
        <label class="l">标题</label>
        <x-field value="VFM 3"></x-field>
        <div class="col g10" style="margin-top:15px">
          <x-opt on><x-i n="user" s="15"></x-i>显示用户菜单</x-opt>
          <x-opt on><x-i n="flag" s="15"></x-i>显示语言菜单</x-opt>
          <x-opt on><x-i n="comment" s="15"></x-i>显示当前的语言</x-opt>
          <x-opt on><x-i n="language" s="15"></x-i>检测浏览器语言</x-opt>
          <x-opt><x-i n="search" s="15"></x-i>全球搜索</x-opt>
          <x-opt on><x-i n="sitemap" s="15"></x-i>归档地图</x-opt>
          <x-opt on><x-i n="dots" s="15"></x-i>面包屑</x-opt>
          <x-opt><x-i n="envelope-o" s="15"></x-i>发送用户之间上传的通知</x-opt>
        </div>
        <div class="p row" style="margin-top:25px;gap:3px;align-items:center"><x-i n="zip" s="17"></x-i>压缩多个文件</div>
        <div class="two" style="margin-top:5px">
          <div class="col"><label class="l">最大文件数</label><x-field value="2000"></x-field></div>
          <div class="col"><label class="l">最大文件大小</label><x-field value="1024" add="MB"></x-field></div>
        </div>
      </div>
      <div class="col">
        <label class="l">应用程序的URL</label>
        <x-field value="http://sgggg.dyurl.cn/"></x-field>
        <div class="three" style="margin-top:15px">
          <div class="col"><label class="l">默认语言</label><x-field select value="简体中文"></x-field></div>
          <div class="col"><label class="l">方向</label><x-field select value="Left to Right"></x-field></div>
          <div class="col"><label class="l">时间格式</label><x-field select value="Y/m/d"></x-field></div>
        </div>
        <label class="l" style="margin-top:15px">默认时区</label>
        <x-field select value="UTC/GMT +00:00 - UTC"></x-field>
        <x-opt style="--m:6px;--h:30px;margin-top:10px">短链接（不可用不要设置这个）</x-opt>
        <div class="p" style="margin-top:5px">原文链接:</div>
        <div style="height:20px;margin-top:1px"><code>/vfm-admin/vfm-downloader.php?q=xxx</code></div>
        <div class="p">短链接不可用（请使用直接链接）：</div>
        <div style="height:20px;margin-top:1px"><code>/download/xxx</code></div>
        <x-opt on style="--m:8px;--h:30px;margin-top:9px"><x-i n="eye" s="15"></x-i><x-i n="arrow-right" s="13"></x-i><x-i n="files" s="15"></x-i>直接链接</x-opt>
      </div>
    </div>
  </x-box>

  <x-box icon="cloud-upload" name="上传" style="min-height:268px">
    <div class="two">
      <div class="col">
        <label class="l row" style="align-items:center;gap:3px"><x-i n="folder-open" s="15"></x-i>上传路径</label>
        <x-field value="uploads"></x-field>
        <div class="help" style="margin-top:5px"><code>download</code> 保留用于Pretty Links网址重写.</div>
        <x-opt radio on style="--h:30px;--m:7px;margin-top:10px">选择你想拒绝上传的文件类型并使用逗号隔开</x-opt>
        <x-tags ph="php,ht...">
          <x-tag>php</x-tag><x-tag>html</x-tag><x-tag>htm</x-tag><x-tag>ini</x-tag><x-tag>jsp</x-tag>
        </x-tags>
        <x-opt radio style="--h:30px;--m:7px;margin-top:10px">允许扩展</x-opt>
      </div>
      <div class="col">
        <label class="l">单个文件的最大上传大小</label>
        <x-field value="0" add="MB"></x-field>
        <x-opt on style="--h:30px;--m:7px;--g:5px;--w:500;margin-top:11px"><x-i n="globe" s="17"></x-i>远程上传</x-opt>
        <label class="l" style="margin-top:6px">允许扩展</label>
        <x-tags ph="jpg,gif,pn.." style="padding-left:13px"></x-tags>
      </div>
    </div>
  </x-box>

  <x-box icon="list-alt" name="名单" style="min-height:562px">
    <div class="two">
      <div class="col">
        <label class="l">默认视图</label>
        <div class="row" style="gap:13px"><x-rb><x-i n="th" s="15"></x-i>格</x-rb><x-rb on><x-i n="th-list" s="15"></x-i>名单</x-rb></div>
        <x-opt on style="margin-top:10px;--m:10px"><x-i n="tablet" s="16"></x-i>内联缩略图</x-opt>
        <x-opt on style="margin-top:15px;--m:10px"><x-i n="win" s="15"></x-i>启动图像缩略图</x-opt>
        <div class="two" style="margin-top:10px">
          <div class="col"><label class="l">缩略图宽度</label><x-field value="760" add="px"></x-field></div>
          <div class="col"><label class="l">缩略图高度</label><x-field value="800" add="px"></x-field></div>
        </div>
        <div class="row" style="margin-top:16px"><x-field value="重新生成缩略图" style="color:#444"></x-field></div>
        <div class="col g10">
          <x-opt on style="--m:10px"><x-i n="search" s="15"></x-i>显示快速搜索框</x-opt>
          <x-opt on style="--m:10px"><x-i n="music" s="15"></x-i>MP3播放器</x-opt>
          <x-opt on style="--m:10px"><x-i n="film" s="15"></x-i>视频播放器</x-opt>
        </div>
      </div>
      <div class="col">
        <h4 style="margin-top:7px"><x-i n="files" s="19"></x-i>文件</h4>
        <div class="row" style="gap:13px;margin-top:8px"><x-rb><x-i n="sort" s="15"></x-i></x-rb><x-rb on><x-i n="calendar" s="15"></x-i></x-rb><x-rb><x-i n="tachometer" s="15"></x-i></x-rb></div>
        <x-opt on style="margin-top:10px;--m:8px"><span class="grey" style="letter-spacing:3px">«‹›»</span>显示简单的页码</x-opt>
        <x-opt on style="margin-top:10px;--m:8px"><span class="grey">«..2..»</span>显示详细数字页码</x-opt>
        <div class="row" style="gap:13px;margin-top:15px"><x-rb on>10</x-rb><x-rb>25</x-rb><x-rb>50</x-rb><x-rb>100</x-rb></div>
        <x-opt style="margin-top:25px;--m:8px;--g:2px"><x-i n="file-o" s="17"></x-i>.显示隐藏的文件</x-opt>
        <h4 style="margin-top:22px"><x-i n="folder-o" s="18"></x-i>文件夹</h4>
        <div class="row" style="gap:13px;margin-top:8px"><x-rb on><x-i n="sort" s="15"></x-i></x-rb><x-rb><x-i n="calendar" s="15"></x-i></x-rb></div>
        <x-opt on style="margin-top:10px;--m:8px;--g:1px"><x-i n="search" s="15"></x-i><x-i n="angleleft" s="11"></x-i><x-i n="folder" s="15"></x-i><x-i n="angleright" s="11"></x-i>显示文件夹页码</x-opt>
        <x-opt on style="margin-top:10px;--m:8px"><span class="grey">‹..2..›</span>显示详细数字页码</x-opt>
        <div class="row" style="gap:13px;margin-top:10px"><x-rb on>5</x-rb><x-rb>10</x-rb><x-rb>25</x-rb><x-rb>50</x-rb></div>
        <x-opt on style="margin-top:25px;--m:8px"><span class="pill"><x-i n="folder-o" s="13"></x-i>0</span><span class="pill"><x-i n="files" s="13"></x-i>0</span>计数器文件夹的内容</x-opt>
        <x-opt on style="margin-top:12px;--m:8px;--g:2px"><x-i n="folder-open" s="15"></x-i><span class="grey">»</span><x-i n="zip" s="16"></x-i>下载文件夹</x-opt>
      </div>
    </div>
  </x-box>

  <x-box icon="scale" is="20" name="权限" style="min-height:1442px">
    <h4 style="margin-top:8px">游客</h4>
    <div class="two" style="margin-top:7px">
      <x-opt on style="background:#fdf6e3;height:25px;--f:18px;--m:11px;--g:6px"><x-i n="lock" s="16"></x-i>您需要登录才可以查看</x-opt>
    </div>
    <hr style="margin-top:36px">
    <x-role name="用户"
      left="eye:查看档案,download:下载档案,paper-plane:分享文件,upload:上传文件"
      right="eye:查看资料夹,plus:创建新的文件夹"></x-role>
    <x-role name="编辑"></x-role>
    <x-role name="会员"></x-role>
    <x-role name="管理员"></x-role>
    <h4>超级管理员</h4>
    <div class="two" style="--h:35px;--m:6px;--w:500;--g:1px">
      <div class="col">
        <x-opt on><x-i n="tachometer" s="20"></x-i>偏好设置</x-opt>
        <x-opt on><x-i n="users" s="20"></x-i>用户</x-opt>
        <x-opt on><x-i n="paint-brush" s="20"></x-i>外貌</x-opt>
      </div>
      <div class="col">
        <x-opt on><x-i n="language" s="20"></x-i>译文</x-opt>
        <x-opt on><x-i n="pie-chart" s="20"></x-i>统计</x-opt>
      </div>
    </div>
  </x-box>

  <x-box icon="user-plus" is="16" name="注册" style="min-height:220px">
    <div class="three">
      <x-info icon="user-plus" name="注册" style="--bg:#00a7d0;--dark:#0089ab"></x-info>
      <div class="col">
        <label class="l">角色</label><x-field select pre="check" value="user"></x-field>
        <label class="l" style="margin-top:16px">保持链接</label><x-field select value="1 day"></x-field>
      </div>
      <div class="col">
        <label class="l">用户文件夹</label><x-field select pre="sitemap" value="新/用户名/文件夹"></x-field>
        <label class="l" style="margin-top:16px">可用空间</label><x-field select pre="tachometer" value="1 GB"></x-field>
      </div>
    </div>
  </x-box>

  <x-box icon="share" is="16" name="分享文件" style="min-height:272px">
    <div class="two">
      <div class="col">
        <label class="l">保持链接</label><x-field select value="24 h"></x-field>
      </div>
      <div class="col g10">
        <x-opt on style="--f:18px;--h:24px;margin-bottom:-1px"><x-i n="circledown" s="17"></x-i>一次性下载<x-i n="question" s="16" c="#3c8dbc"></x-i></x-opt>
        <x-opt on><x-i n="key" s="14"></x-i>密码保护</x-opt>
        <x-opt on><x-i n="clip" s="15"></x-i>复制按钮</x-opt>
        <x-opt on><x-i n="win" s="15"></x-i>启动图像缩略图</x-opt>
        <x-opt on><x-i n="music" s="15"></x-i>MP3播放器</x-opt>
        <x-opt on><x-i n="film" s="15"></x-i>视频播放器</x-opt>
      </div>
    </div>
  </x-box>

  <x-box icon="envelope" is="16" name="电邮" style="min-height:225px">
    <div class="two">
      <div class="col">
        <label class="l row" style="align-items:center;gap:2px"><x-i n="envelope-o" s="14"></x-i>使用这个邮箱发送系统邮件</label>
        <x-field ph="noreply@example.com" style="--fh:46px;--ff:18px"></x-field>
        <x-opt style="margin-top:52px;--m:6px;--w:500">SMTP mail</x-opt>
      </div>
      <div class="col">
        <label class="l row" style="align-items:center;gap:3px"><x-i n="cert" s="14"></x-i>商标</label>
        <div style="height:34px;background:repeating-conic-gradient(#c9c9c9 0 25%,#fff 0 50%) 0 0/12px 12px"></div>
        <div class="row" style="margin-top:15px;height:33px;box-sizing:border-box;border:1px solid #d2d6de;align-items:center;justify-content:center;gap:3px;color:#444">上传<x-i n="upload" s="14"></x-i></div>
      </div>
    </div>
  </x-box>

  <x-box icon="shield" is="17" name="安全" style="min-height:463px">
    <h4 style="margin-top:8px">验证码（为了用户体验分享最好不要设置验证）</h4>
    <div class="two" style="--h:35px;--m:8px;--w:500;--g:3px">
      <div class="col">
        <x-opt><x-i n="sign-in" s="16"></x-i>登陆</x-opt>
        <x-opt><x-i n="tachometer" s="16"></x-i>管理</x-opt>
        <x-opt on><x-i n="key" s="16"></x-i>重设密码</x-opt>
        <x-opt on><x-i n="share" s="16"></x-i>分享文件</x-opt>
        <x-opt on><x-i n="user-plus" s="16"></x-i>注册</x-opt>
      </div>
      <div class="col">
        <x-opt style="--f:18px;--w:400;--h:41px"><x-i n="google" s="17"></x-i>ReCAPTCHA<x-i n="info" s="16" c="#3c8dbc"></x-i></x-opt>
      </div>
    </div>
    <hr style="margin:27px 0 20px">
    <div class="row" style="justify-content:space-between;align-items:flex-start">
      <h4 style="margin-top:7px">IP黑白名单</h4>
      <div class="row" style="align-items:center;height:21px;gap:3px;font-size:14px">你的ip地址: <span style="background:#00c0ef;color:#fff;border-radius:3px;height:21px;line-height:21px;padding:0 6px;font-size:13px">113.118.15.51</span></div>
    </div>
    <div class="two" style="margin-top:8px">
      <div class="col">
        <x-opt radio on style="--m:6px;--w:500">黑名单</x-opt>
        <x-tags ph="xxx,xxx,x.." style="margin-top:5px;--th:32px;padding-left:6px;font-size:13px"></x-tags>
        <x-opt radio style="margin-top:15px;--m:6px;--w:500">白名单</x-opt>
      </div>
      <div class="col">
        <label class="l">网址重定向</label>
        <x-field ph="http://google.com" style="--fh:33px"></x-field>
      </div>
    </div>
  </x-box>

  <x-box icon="bar-chart" is="16" name="活动日志" style="min-height:177px">
    <div class="three">
      <x-info icon="pie-chart" name="统计" style="--bg:#008d4c;--dark:#00733e"></x-info>
      <div class="col">
        <label class="l row" style="align-items:center;gap:2px"><x-i n="envelope" s="14"></x-i>电子邮件通知</label>
        <x-field ph="admin1@mail.ext, admin2@ma..."></x-field>
        <div class="help" style="margin-top:10px">在这里设置一个电子邮件地址，收到通知的每一项活动</div>
      </div>
      <div class="col">
        <label class="l">选择通知:</label>
        <div class="row" style="gap:11px">
          <x-bub n="sign-in"></x-bub><x-bub n="upload"></x-bub><x-bub n="download"></x-bub><x-bub n="file-o"></x-bub><x-bub n="cloud-upload"></x-bub>
        </div>
      </div>
    </div>
  </x-box>

  <x-box icon="paint-brush" is="18" name="管理配色方案" style="min-height:152px">
    <div class="row" style="gap:29.400px;margin-left:-1px">
      <x-scheme on name="blue" c="#3c8dbc,#161c26,#1f2937" style="width:346px"></x-scheme>
      <x-scheme name="purple" c="#605ca8,#1a1f2a,#222a35" style="width:346px"></x-scheme>
      <x-scheme name="red" c="#dd4b39,#212328,#2b2c36" style="width:346px"></x-scheme>
      <x-scheme name="yellow" c="#f39c12,#1a1f2a,#222b34" style="width:346px"></x-scheme>
      <x-scheme name="green" c="#00a65a,#1a2624,#253431" style="width:346px"></x-scheme>
      <x-scheme name="white" c="transparent,#262626,#333333" style="width:346px"></x-scheme>
    </div>
  </x-box>

  <x-save>保存更改</x-save>
  <x-opt style="margin-top:15px;--m:4px;--w:500;--g:2px"><x-i n="wrench" s="15"></x-i>DEBUG MODE<x-i n="question" s="14" c="#3c8dbc"></x-i></x-opt>

  <x-foot slot="foot"></x-foot>
</x-app>
</body>
</html>
